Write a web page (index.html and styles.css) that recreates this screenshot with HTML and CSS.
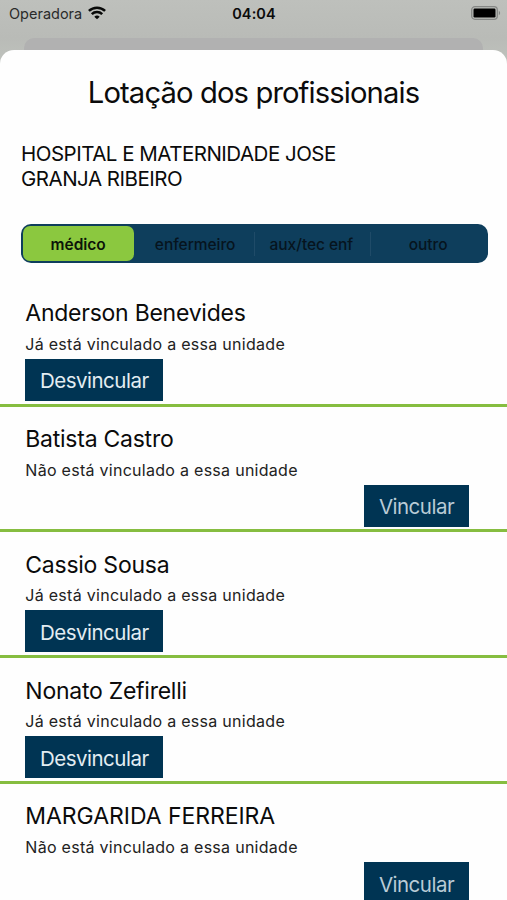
FILE: index.html
```html
<!DOCTYPE html>
<html lang="pt-BR">
<head>
<meta charset="utf-8">
<meta name="viewport" content="width=device-width, initial-scale=1">
<title>Lotação dos profissionais</title>
<link rel="stylesheet" href="styles.css">
</head>
<body>
<header class="status">
  <div class="carrier"><span>Operadora</span>
    <svg class="wifi" viewBox="0 0 18 14" width="18" height="14" fill="none" stroke="#080908" stroke-width="2.5"><path d="M.9 4.9a11.7 11.7 0 0 1 16.2 0M3.8 8.2a7.4 7.4 0 0 1 10.4 0"/><path d="M9 13.3 6.3 10.8a4 4 0 0 1 5.4 0Z" fill="#080908" stroke="none"/></svg>
  </div>
  <time class="clock">04:04</time>
  <svg class="battery" viewBox="0 0 30 14" width="30" height="14"><rect x=".7" y=".7" width="25.6" height="12.6" rx="3.3" fill="none" stroke="#858785" stroke-width="1.3"/><rect x="2.5" y="2.5" width="22" height="9" rx="1.2" fill="#000"/><path d="M27.8 4.8a2.5 2.5 0 0 1 0 4.4Z" fill="#858785"/></svg>
</header>
<div class="behind"></div>
<main class="sheet">
  <h1 class="title">Lotação dos profissionais</h1>
  <p class="unit">HOSPITAL E MATERNIDADE JOSE<br>GRANJA RIBEIRO</p>
  <nav class="tabs">
    <button class="tab active">médico</button>
    <button class="tab">enfermeiro</button>
    <button class="tab divided">aux/tec enf</button>
    <button class="tab divided last">outro</button>
  </nav>
  <ul class="list">
    <li class="row"><h2 class="name">Anderson Benevides</h2><p class="state">Já está vinculado a essa unidade</p><button class="action">Desvincular</button></li>
    <li class="row"><h2 class="name">Batista Castro</h2><p class="state">Não está vinculado a essa unidade</p><button class="action link">Vincular</button></li>
    <li class="row"><h2 class="name">Cassio Sousa</h2><p class="state">Já está vinculado a essa unidade</p><button class="action">Desvincular</button></li>
    <li class="row"><h2 class="name">Nonato Zefirelli</h2><p class="state">Já está vinculado a essa unidade</p><button class="action">Desvincular</button></li>
    <li class="row"><h2 class="name upper">MARGARIDA FERREIRA</h2><p class="state">Não está vinculado a essa unidade</p><button class="action link">Vincular</button></li>
  </ul>
</main>
</body>
</html>
```

FILE: styles.css
```css
* { box-sizing: border-box; margin: 0; padding: 0; }
html, body { height: 900px; overflow: hidden; }
body {
  background: linear-gradient(#bec0bc, #b9bbb7 38px, #c0c4be 70px);
  color: #0b0b0b;
  font-family: Inter, "Liberation Sans", sans-serif;
  display: flex;
  flex-direction: column;
}
button { border: 0; font: inherit; color: inherit; }
.status {
  flex: none;
  height: 38px;
  padding: 0 6px 11px 9px;
  display: grid;
  grid-template-columns: 1fr auto 1fr;
  align-items: center;
}
.carrier { display: flex; align-items: center; gap: 6px; font-size: 14.5px; color: #2a2b2a; }
.wifi { margin-top: -2px; }
.clock { margin-right: 2px; font-size: 14.5px; font-weight: 600; letter-spacing: .1px; }
.battery { justify-self: end; margin-top: -1px; }
.behind { flex: none; height: 12px; margin: 0 24px; border-radius: 10px 10px 0 0; background: #b1b1b1; }
.sheet { flex: none; height: 850px; background: #fefefe; border-radius: 14px 14px 0 0; overflow: hidden; }
.title { margin: 25px 0 0; text-align: center; font-size: 29.2px; line-height: 35px; font-weight: 400; letter-spacing: -.88px; }
.unit { margin: 31px 0 0 21px; font-size: 20.5px; line-height: 25px; letter-spacing: -.5px; }
.tabs {
  display: grid;
  grid-template-columns: repeat(4, 1fr);
  margin: 33.3px 19.5px 0 20.5px;
  height: 39px;
  padding: 2px;
  border-radius: 10px;
  background: #0e3e5c;
}
.tab { padding: 1px 2px 0 0; background: none; font-size: 15.5px; font-weight: 500; letter-spacing: -.05px; color: #06141e; }
.active { margin: 0 4px 0 .5px; padding-right: 1px; background: #8bc83f; border-radius: 7px; font-weight: 600; color: #0c1408; }
.divided { padding-right: 1px; background: linear-gradient(#1f4b68, #1f4b68) left center / 1px 24px no-repeat; }
.last { padding: 1px 0 0 1px; }
.list { list-style: none; margin-top: 17.5px; }
.row {
  height: 125.85px;
  padding: 18.3px 38px 0 25.3px;
  border-bottom: 3.5px solid #86bd40;
  display: flex;
  flex-direction: column;
  align-items: flex-start;
}
.name { font-size: 23px; line-height: 28px; font-weight: 400; letter-spacing: -.25px; }
.upper { letter-spacing: -.05px; }
.state { margin-top: 6.7px; font-size: 16px; line-height: 20px; letter-spacing: .28px; color: #222; }
.action { margin-top: 5px; padding-top: 2px; width: 138px; height: 42px; background: #003453; color: #e3edf2; font-size: 20.5px; letter-spacing: -.5px; }
.link { align-self: flex-end; width: 105px; color: #b9cbd6; }
```
